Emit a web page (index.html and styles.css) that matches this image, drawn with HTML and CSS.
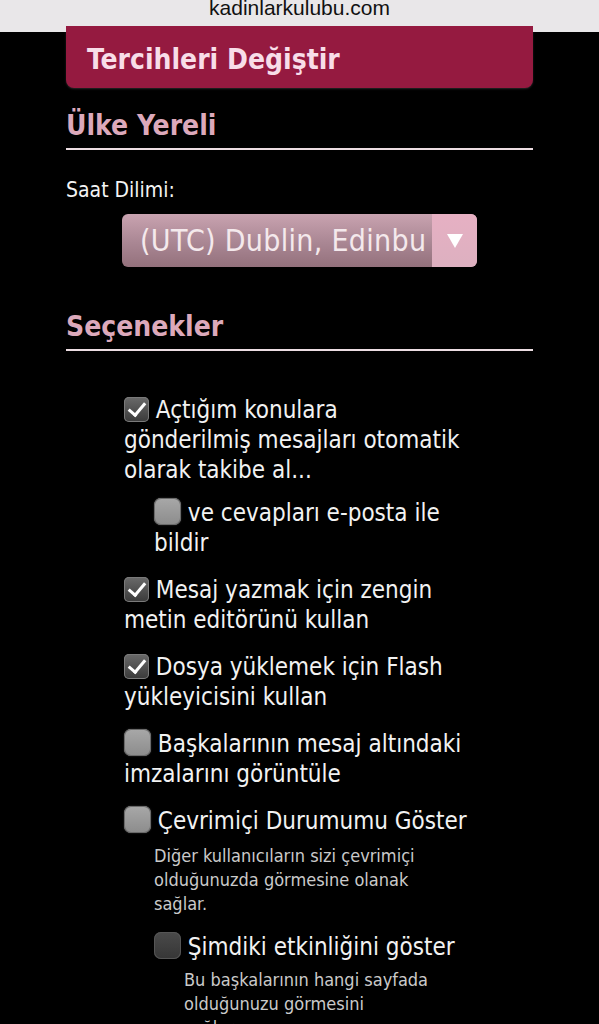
FILE: index.html
```html
<!DOCTYPE html>
<html lang="tr">
<head>
    <meta charset="UTF-8">
    <meta name="viewport" content="width=device-width, initial-scale=1.0">
    <title>Tercihleri Değiştir</title>
    <link rel="stylesheet" href="styles.css">
</head>
<body>
    <div class="url-bar">kadinlarkulubu.com</div>

    <div class="page">
        <div class="title-box">Tercihleri Değiştir</div>

        <h2 class="section-title">Ülke Yereli</h2>

        <div class="field">
            <label class="field-label">Saat Dilimi:</label>
            <div class="select">
                <span class="select-text">(UTC) Dublin, Edinbu</span>
                <span class="select-arrow"></span>
            </div>
        </div>

        <h2 class="section-title">Seçenekler</h2>

        <ul class="options">
            <li class="option">
                <span class="box checked"></span> Açtığım konulara gönderilmiş mesajları otomatik olarak takibe al...
                <ul class="options sub">
                    <li class="option">
                        <span class="box"></span> ve cevapları e-posta ile bildir
                    </li>
                </ul>
            </li>
            <li class="option">
                <span class="box checked"></span> Mesaj yazmak için zengin metin editörünü kullan
            </li>
            <li class="option">
                <span class="box checked"></span> Dosya yüklemek için Flash yükleyicisini kullan
            </li>
            <li class="option">
                <span class="box"></span> Başkalarının mesaj altındaki imzalarını görüntüle
            </li>
            <li class="option">
                <span class="box"></span> Çevrimiçi Durumumu Göster
                <p class="hint">Diğer kullanıcıların sizi çevrimiçi olduğunuzda görmesine olanak sağlar.</p>
                <ul class="options sub">
                    <li class="option">
                        <span class="box disabled"></span> Şimdiki etkinliğini göster
                        <p class="hint">Bu başkalarının hangi sayfada olduğunuzu görmesini<br>sağlar.</p>
                    </li>
                </ul>
            </li>
        </ul>
    </div>
</body>
</html>
```

FILE: styles.css
```css
/* Base */
* {
    margin: 0;
    padding: 0;
    box-sizing: border-box;
}

body {
    background: #000;
    color: #f2f2f2;
    font-family: 'DejaVu Sans Condensed', 'DejaVu Sans', sans-serif;
    width: 599px;
    height: 1024px;
    overflow: hidden;
}

/* Browser address bar */
.url-bar {
    height: 32px;
    background: #e9e7e9;
    color: #111;
    font-family: 'Liberation Sans', Arial, sans-serif;
    font-size: 21px;
    line-height: 16px;
    text-align: center;
    overflow: hidden;
}

.page {
    padding: 0 66px;
}

.title-box {
    background: #951a40;
    color: #f8dde8;
    font-size: 28px;
    font-weight: bold;
    height: 62px;
    line-height: 58px;
    padding: 5px 21px 0;
    margin-top: -6px;
    border-radius: 0 0 8px 8px;
    box-shadow: 0 1px 2px rgba(255,255,255,0.15);
}

.section-title {
    color: #dca9bb;
    font-size: 28px;
    line-height: 32px;
    font-weight: bold;
    padding-top: 22px;
    padding-bottom: 6px;
    border-bottom: 2px solid #ecdde2;
}

/* Time zone */
.field {
    padding: 28px 0 22px;
}

.field-label {
    display: block;
    font-size: 21px;
    line-height: 24px;
    color: #f4f4f4;
    margin-bottom: 12px;
}

.select {
    display: flex;
    width: 355px;
    height: 53px;
    margin-left: 56px;
    border-radius: 6px;
    overflow: hidden;
    background: linear-gradient(to bottom, #c9a3b0, #a98693 55%, #94717c);
}

.select-text {
    flex: 1;
    padding-left: 18px;
    font-size: 30px;
    letter-spacing: 0.3px;
    line-height: 53px;
    color: #f4e9ec;
    white-space: nowrap;
    overflow: hidden;
}

.select-arrow {
    width: 45px;
    display: flex;
    align-items: center;
    justify-content: center;
    background: linear-gradient(to bottom, #e6b0c3, #ddb0c0);
}

.select-arrow::after {
    content: '';
    border-left: 8px solid transparent;
    border-right: 8px solid transparent;
    border-top: 14px solid #fff;
}

/* Options list */
.options {
    list-style: none;
    padding: 44px 0 0 58px;
    width: 404px;
}

.option {
    font-size: 24px;
    line-height: 30px;
    margin-bottom: 17px;
}

.options.sub {
    padding: 13px 0 0 30px;
    width: auto;
}

.options.sub .option {
    margin-bottom: 0;
}

.hint + .options.sub {
    padding-top: 16px;
}

.box {
    display: inline-block;
    width: 27px;
    height: 27px;
    vertical-align: -4px;
    border-radius: 7px;
    background: linear-gradient(to bottom, #a8a8a8, #8c8c8c);
    box-shadow: inset 0 0 0 1px #6a6a6a, 0 0 2px rgba(255,255,255,0.2);
}

.box.checked {
    width: 25px;
    height: 25px;
    border-radius: 5px;
    background: linear-gradient(to bottom, #6a6a6a, #3a3a3a);
    box-shadow: inset 0 0 0 1px #7a7a7a;
    position: relative;
}

.box.checked::after {
    content: '';
    position: absolute;
    left: 8px;
    top: 2px;
    width: 7px;
    height: 14px;
    border: solid #fff;
    border-width: 0 3px 3px 0;
    transform: rotate(40deg);
}

.box.disabled {
    background: linear-gradient(to bottom, #4a4a4a, #363636);
    box-shadow: inset 0 0 0 1px #555;
}

.hint {
    font-size: 18px;
    line-height: 24px;
    color: #cacaca;
    padding: 8px 0 0 30px;
    width: 335px;
}

.sub .hint {
    padding-top: 6px;
}
```
